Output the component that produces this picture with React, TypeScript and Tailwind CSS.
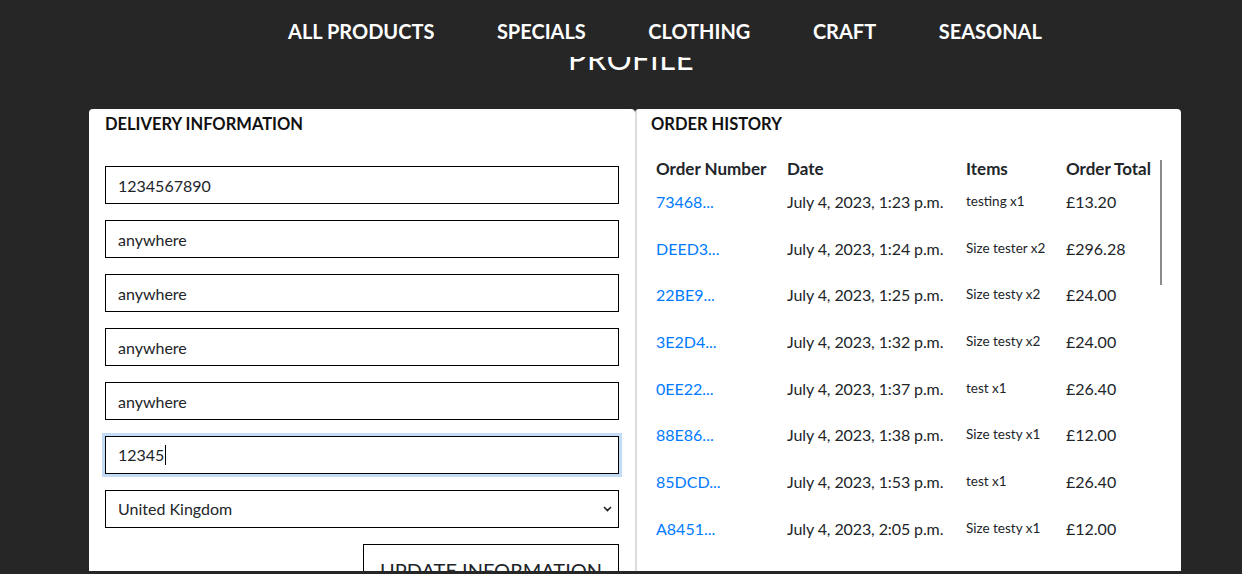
const NAV = ['ALL PRODUCTS', 'SPECIALS', 'CLOTHING', 'CRAFT', 'SEASONAL'];

const FIELDS = ['1234567890', 'anywhere', 'anywhere', 'anywhere', 'anywhere'];

const ORDERS = [
  { id: '73468...', date: 'July 4, 2023, 1:23 p.m.', items: 'testing x1', total: '£13.20' },
  { id: 'DEED3...', date: 'July 4, 2023, 1:24 p.m.', items: 'Size tester x2', total: '£296.28' },
  { id: '22BE9...', date: 'July 4, 2023, 1:25 p.m.', items: 'Size testy x2', total: '£24.00' },
  { id: '3E2D4...', date: 'July 4, 2023, 1:32 p.m.', items: 'Size testy x2', total: '£24.00' },
  { id: '0EE22...', date: 'July 4, 2023, 1:37 p.m.', items: 'test x1', total: '£26.40' },
  { id: '88E86...', date: 'July 4, 2023, 1:38 p.m.', items: 'Size testy x1', total: '£12.00' },
  { id: '85DCD...', date: 'July 4, 2023, 1:53 p.m.', items: 'test x1', total: '£26.40' },
  { id: 'A8451...', date: 'July 4, 2023, 2:05 p.m.', items: 'Size testy x1', total: '£12.00' },
];

const inputClass =
  'block w-full h-[38px] border border-black bg-white px-3 text-[16px] leading-6 text-[#212529] outline-none';

export default function App() {
  return (
    <div className="h-[574px] overflow-hidden bg-[#262626] font-['Lato',sans-serif]">
      <div className="h-[571px] overflow-hidden">
        <nav className="relative z-10 h-[57px] bg-[#262626] pt-[17px] pl-[288px]">
          <ul className="flex gap-[62.5px]">
            {NAV.map((n) => (
              <li key={n} className="text-[20px] font-bold leading-7 text-white">
                {n}
              </li>
            ))}
          </ul>
        </nav>

        <h1 className="-mt-[19px] mb-[31px] pl-[20px] text-center text-[31px] leading-10 tracking-[0.5px] text-white">
          PROFILE
        </h1>

        <main className="ml-[89px] flex w-[1092px]">
          {/* delivery info */}
          <section className="w-[546px] rounded-[4px] bg-white px-4 pt-[5px] pb-6">
            <h2 className="text-[16.5px] font-bold leading-5 text-[#111]">DELIVERY INFORMATION</h2>
            <form className="mt-[32px] flex flex-col gap-4">
              {FIELDS.map((v, i) => (
                <input key={i} className={inputClass} defaultValue={v} readOnly />
              ))}
              <div className={`${inputClass} flex items-center shadow-[0_0_0_3px_#c3dcf6]`}>
                <span>12345</span>
                <span className="ml-px h-[20px] w-px bg-black" />
              </div>
              <div className="relative">
                <select className={`${inputClass} appearance-none`} defaultValue="GB">
                  <option value="GB">United Kingdom</option>
                </select>
                <svg
                  className="pointer-events-none absolute right-[7px] top-[16px]"
                  width="9"
                  height="6"
                  viewBox="0 0 9 6"
                  fill="none"
                >
                  <path d="M1 1l3.5 3.5L8 1" stroke="#222" strokeWidth="1.6" />
                </svg>
              </div>
              <div className="flex justify-end">
                <button
                  type="button"
                  className="w-[256px] whitespace-nowrap border border-black bg-white pt-[10px] pb-[10px] text-center text-[20px] leading-[30px] text-[#212529]"
                >
                  UPDATE INFORMATION
                </button>
              </div>
            </form>
          </section>

          {/* order history */}
          <section className="relative w-[546px] rounded-[4px] border-l-2 border-[#dddddd] bg-white pl-[14px] pt-[5px] pb-6">
            <h2 className="text-[16.5px] font-bold leading-5 text-[#111]">ORDER HISTORY</h2>
            <div className="mt-[23px] pl-[5px] text-[16px] leading-6 text-[#212529]">
              <div className="grid h-[33px] grid-cols-[131px_179px_100px_1fr] text-[17px] font-bold">
                <span>Order Number</span>
                <span>Date</span>
                <span>Items</span>
                <span>Order Total</span>
              </div>
              {ORDERS.map((o) => (
                <div key={o.id} className="grid h-[46.67px] grid-cols-[131px_179px_100px_1fr]">
                  <a className="text-[#007bff]">{o.id}</a>
                  <span className="tracking-[-0.1px]">{o.date}</span>
                  <span className="text-[13.5px] leading-[22px]">{o.items}</span>
                  <span>{o.total}</span>
                </div>
              ))}
            </div>
            <div className="absolute left-[523px] top-[51px] h-[125px] w-[2px] bg-[#8a8a8a]" />
          </section>
        </main>
      </div>
    </div>
  );
}
